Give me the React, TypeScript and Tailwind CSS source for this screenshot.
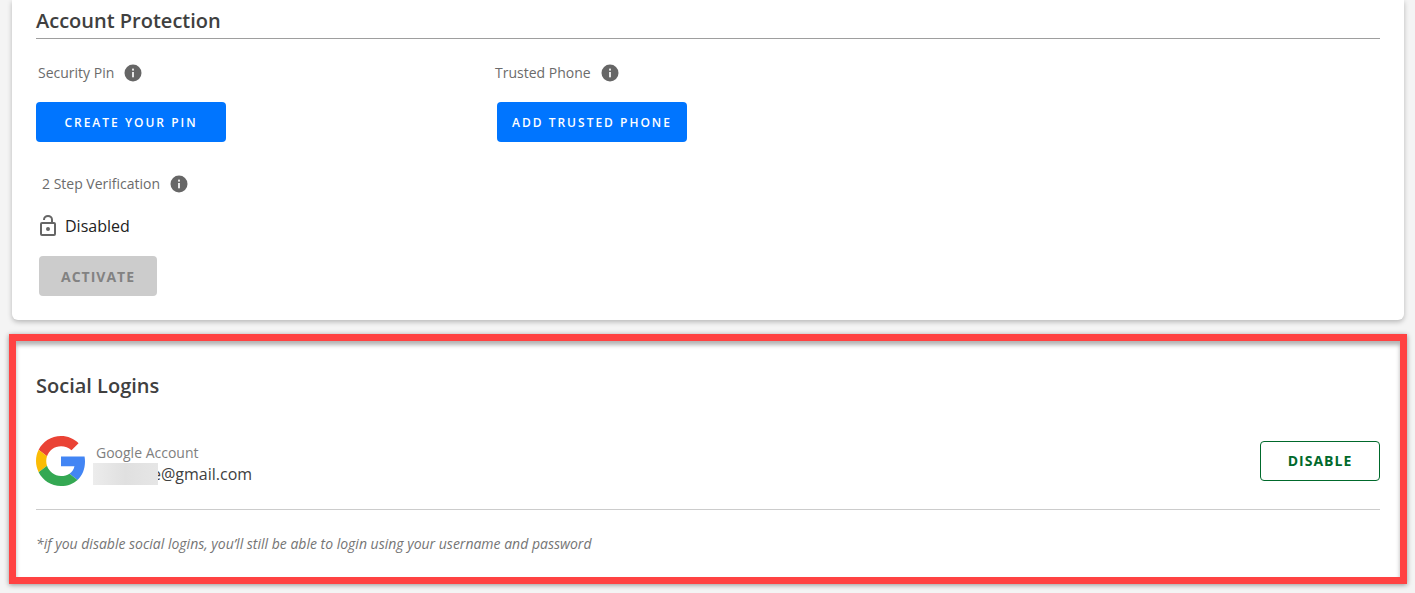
import React from 'react';

const InfoIcon: React.FC<{ label: string }> = ({ label }) => (
  <svg viewBox="0 0 18 18" className="h-[18px] w-[18px]" role="img" aria-label={label}>
    <circle cx="9" cy="9" r="8.5" fill="#666666" />
    <rect x="8" y="4.6" width="2" height="2" fill="#e6e6e6" />
    <rect x="8" y="8" width="2" height="5.3" fill="#e6e6e6" />
  </svg>
);

const UnlockIcon: React.FC = () => (
  <svg viewBox="0 0 18 22" className="h-[22px] w-[18px]" fill="none" aria-hidden="true">
    <rect x="2" y="8" width="14" height="12" rx="1" stroke="#666666" strokeWidth="2" />
    <path d="M5 5V4.7C5 2.5 6.8 1 9 1s4 1.5 4 3.7V8" stroke="#666666" strokeWidth="2" />
    <circle cx="9" cy="14" r="2" fill="#666666" />
  </svg>
);

const GoogleLogo: React.FC = () => (
  <svg viewBox="2 2 44 44" className="h-[50px] w-[50px]" role="img" aria-label="Google">
    <path fill="#EA4335" d="M24 11c3.54 0 6.71 1.22 9.21 3.6l6.24-6.24C35.45 4.38 30.1 2 24 2 15.4 2 7.96 6.93 4.34 14.12l7.35 5.7C13.43 14.62 18.27 11 24 11z" />
    <path fill="#4285F4" d="M45.12 24.5c0-1.56-.14-3.06-.4-4.5H24v8.51h11.84c-.51 2.75-2.06 5.08-4.39 6.64l7.11 5.52c4.16-3.83 6.56-9.47 6.56-16.17z" />
    <path fill="#FBBC05" d="M11.69 28.18C11.25 26.86 11 25.45 11 24s.25-2.86.69-4.18l-7.35-5.7C2.85 17.09 2 20.45 2 24s.85 6.91 2.34 9.88l7.35-5.7z" />
    <path fill="#34A853" d="M24 46c5.94 0 10.92-1.97 14.56-5.33l-7.11-5.52c-1.97 1.32-4.49 2.1-7.45 2.1-5.73 0-10.57-3.87-12.31-9.07l-7.35 5.7C7.96 41.07 15.4 46 24 46z" />
  </svg>
);

const FieldLabel: React.FC<{ text: string }> = ({ text }) => (
  <div className="flex h-5 items-center gap-2.5 text-sm text-[#6b6b6b]">
    <span>{text}</span>
    <InfoIcon label={`About ${text}`} />
  </div>
);

const App: React.FC = () => {
  return (
    <main className="bg-[#f4f4f4] pr-2 pb-[9px] pl-[9px] font-['Open_Sans',sans-serif] text-[#404040]">
      {/* Account protection */}
      <section className="mx-[3px] rounded-b-md bg-white px-6 pt-[7px] pb-6 shadow-[0_2px_5px_rgba(0,0,0,0.25)]">
        <h2 className="border-b border-[#9e9e9e] pb-[3px] text-xl leading-7 font-semibold">Account Protection</h2>

        <div className="mt-6 grid grid-cols-3 gap-[33px]">
          <div>
            <div className="pl-0.5">
              <FieldLabel text="Security Pin" />
            </div>
            <button
              type="button"
              className="mt-[19px] h-10 w-[190px] rounded bg-[#0075ff] pt-0.5 text-xs font-semibold tracking-[2px] text-white"
            >
              CREATE YOUR PIN
            </button>
          </div>
          <div>
            <FieldLabel text="Trusted Phone" />
            <button
              type="button"
              className="mt-[19px] ml-0.5 h-10 w-[190px] rounded bg-[#0075ff] pt-0.5 text-xs font-semibold tracking-[2px] text-white"
            >
              ADD TRUSTED PHONE
            </button>
          </div>
        </div>

        <div className="mt-8 pl-[3px]">
          <div className="pl-[3px]">
            <FieldLabel text="2 Step Verification" />
          </div>
          <p className="mt-5 flex h-6 items-center gap-2 text-base text-[#222222]">
            <UnlockIcon />
            Disabled
          </p>
          <button
            type="button"
            disabled
            className="mt-[18px] h-10 w-[118px] rounded bg-[#cccccc] pt-0.5 text-sm font-bold tracking-[1px] text-[#828282]"
          >
            ACTIVATE
          </button>
        </div>
      </section>

      {/* Social logins, framed in red */}
      <section className="mt-[14px] border-[7px] border-[#ff4242] bg-white px-5 pt-[31px] pb-[23px] shadow-[0_1px_5px_rgba(0,0,0,0.4),inset_0_4px_4px_rgba(0,0,0,0.3)]">
        <h2 className="text-xl leading-7 font-semibold">Social Logins</h2>

        <div className="mt-9 flex items-center justify-between border-b border-[#cccccc] pb-[23px]">
          <div className="flex items-center gap-[7px]">
            <GoogleLogo />
            <div className="pt-[6px]">
              <p className="pl-[3px] text-sm leading-5 text-[#808080]">Google Account</p>
              <p className="flex h-[22px] items-center text-base">
                <span className="z-10 h-[22px] w-[65px] bg-linear-to-r from-[#ececec] via-[#e0e0e0] to-[#e6e6e6]"></span>
                <span className="-ml-1.5">e@gmail.com</span>
              </p>
            </div>
          </div>
          <button
            type="button"
            className="h-10 w-[120px] rounded border border-[#00692b] text-sm font-bold tracking-[1px] text-[#00692b]"
          >
            DISABLE
          </button>
        </div>

        <p className="mt-6 text-sm leading-5 text-[#757575] italic">
          *if you disable social logins, you’ll still be able to login using your username and password
        </p>
      </section>
    </main>
  );
};

export default App;
